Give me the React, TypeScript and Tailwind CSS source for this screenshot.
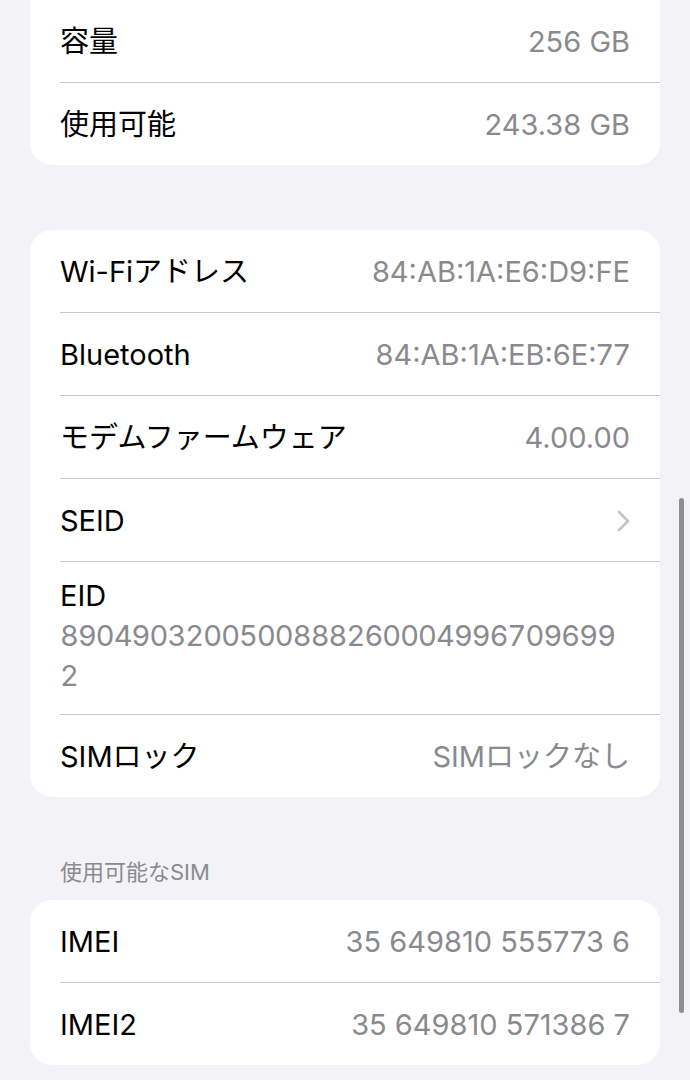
import React from "react";

const FONT = { fontFamily: 'Inter, "Noto Sans CJK JP", sans-serif' };

type Item = { label: string; value?: string; chevron?: boolean };

function Chevron() {
  return (
    <svg width="13" height="22" viewBox="0 0 13 22" fill="none" aria-hidden>
      <path d="M2 2l9 9-9 9" stroke="#c4c4c7" strokeWidth="2.6" strokeLinecap="round" strokeLinejoin="round" />
    </svg>
  );
}

function Row({ item, last }: { item: Item; last?: boolean }) {
  return (
    <div className={"ml-[30px] flex h-[80px] items-center justify-between pr-[30px] pt-[2px] box-content " + (last ? "" : "border-b border-[#c8c8cc]")}>
      <span className="text-[29px] text-black">{item.label}</span>
      {item.chevron ? <Chevron /> : <span className="text-[29px] text-[#8a8a8e]">{item.value}</span>}
    </div>
  );
}

export default function App() {
  return (
    <div className="relative min-h-[1080px] w-[690px] overflow-hidden bg-[#f2f2f7] px-[30px]" style={FONT}>
      {/* 容量 */}
      <div className="rounded-b-[22px] bg-white">
        <Row item={{ label: "容量", value: "256 GB" }} />
        <Row item={{ label: "使用可能", value: "243.38 GB" }} last />
      </div>

      <div className="mt-[65px] rounded-[22px] bg-white">
        <Row item={{ label: "Wi-Fiアドレス", value: "84:AB:1A:E6:D9:FE" }} />
        <Row item={{ label: "Bluetooth", value: "84:AB:1A:EB:6E:77" }} />
        <Row item={{ label: "モデムファームウェア", value: "4.00.00" }} />
        <Row item={{ label: "SEID", chevron: true }} />
        <div className="ml-[30px] border-b border-[#c8c8cc] pb-[18px] pr-[35px] pt-[14px]">
          <div className="text-[29px] leading-[40px] text-black">EID</div>
          <div className="break-all text-[29px] leading-[40px] tracking-[-0.9px] text-[#8a8a8e] tabular-nums">
            89049032005008882600049967096992
          </div>
        </div>
        <Row item={{ label: "SIMロック", value: "SIMロックなし" }} last />
      </div>

      <div className="mt-[62px] mb-[15px] pl-[30px] text-[22px] leading-[26px] text-[#8a8a8e]">使用可能なSIM</div>

      <div className="rounded-[22px] bg-white">
        <Row item={{ label: "IMEI", value: "35 649810 555773 6" }} />
        <Row item={{ label: "IMEI2", value: "35 649810 571386 7" }} last />
      </div>

      {/* scroll indicator */}
      <div className="absolute left-[679px] top-[498px] h-[515px] w-[5px] rounded-full bg-[#8e8e93]" />
    </div>
  );
}
